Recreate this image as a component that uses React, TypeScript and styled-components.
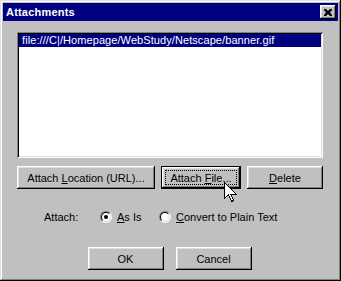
import { FC, ReactNode } from 'react'
import styled, { createGlobalStyle, css } from 'styled-components'

const GlobalStyle = createGlobalStyle`
  html, body {
    margin: 0;
    padding: 0;
    background: #c0c0c0;
  }
  body {
    font-family: "Liberation Sans", Arial, sans-serif;
    font-size: 11px;
  }
`

const raised = css`
  box-shadow: inset -1px -1px #000, inset 1px 1px #dfdfdf,
    inset -2px -2px #808080, inset 2px 2px #fff;
`

const buttonBevel = css`
  box-shadow: inset -1px -1px #000, inset 1px 1px #fff,
    inset -2px -2px #808080, inset 2px 2px #dfdfdf;
`

const Window = styled.div`
  position: relative;
  width: 341px;
  height: 281px;
  box-sizing: border-box;
  padding: 3px;
  background: #c0c0c0;
  ${raised}
`

const TitleBar = styled.div`
  height: 18px;
  background: #000080;
  display: flex;
  align-items: center;
  justify-content: space-between;
  padding: 0 2px 0 3px;
`

const Title = styled.span`
  color: #fff;
  font-weight: bold;
  font-size: 11px;
  letter-spacing: 0.2px;
`

const CloseButton = styled.div`
  width: 16px;
  height: 14px;
  background: #c0c0c0;
  display: flex;
  align-items: center;
  justify-content: center;
  ${buttonBevel}
`

const Body = styled.div`
  padding: 11px 15px 0 14px;
  display: flex;
  flex-direction: column;
`

const ListBox = styled.div`
  height: 126px;
  box-sizing: border-box;
  padding: 2px;
  background: #fff;
  box-shadow: inset 1px 1px #808080, inset -1px -1px #fff,
    inset 2px 2px #000, inset -2px -2px #dfdfdf;
`

const ListItem = styled.div<{ $selected?: boolean }>`
  height: 13px;
  line-height: 13px;
  padding-left: 3px;
  white-space: nowrap;
  letter-spacing: 0.08px;
  color: ${(p) => (p.$selected ? '#fff' : '#000')};
  background: ${(p) => (p.$selected ? '#000080' : 'transparent')};
`

const ButtonRow = styled.div`
  position: relative;
  margin-top: 8px;
  display: flex;
  justify-content: space-between;
`

const Button = styled.div<{ $width: number; $focused?: boolean }>`
  width: ${(p) => p.$width}px;
  height: 23px;
  box-sizing: border-box;
  display: flex;
  align-items: center;
  justify-content: center;
  color: #000;
  background: #c0c0c0;
  ${buttonBevel}
  ${(p) =>
    p.$focused &&
    css`
      border: 1px solid #000;
      padding: 3px;
    `}
`

const FocusLabel = styled.span`
  flex: 1;
  align-self: stretch;
  display: flex;
  align-items: center;
  justify-content: center;
  outline: 1px dotted #000;
  outline-offset: -1px;
`

const Key = styled.span`
  text-decoration: underline;
  text-underline-offset: 1px;
`

const Cursor = styled.svg`
  position: absolute;
  left: 207px;
  top: 16px;
`

const RadioRow = styled.div`
  margin-top: 22px;
  height: 12px;
  display: flex;
  align-items: center;
  padding-left: 27px;
`

const FieldLabel = styled.span`
  width: 56px;
`

const RadioOption = styled.label<{ $width: number }>`
  display: flex;
  align-items: center;
  gap: 5px;
  width: ${(p) => p.$width}px;
`

const RadioOuter = styled.span`
  width: 12px;
  height: 12px;
  box-sizing: border-box;
  border-radius: 50%;
  border: 1px solid;
  border-color: #808080 #fff #fff #808080;
  display: flex;
`

const RadioInner = styled.span`
  flex: 1;
  border-radius: 50%;
  border: 1px solid;
  border-color: #000 #dfdfdf #dfdfdf #000;
  background: #fff;
  display: flex;
  align-items: center;
  justify-content: center;
`

const RadioDot = styled.span`
  width: 4px;
  height: 4px;
  border-radius: 50%;
  background: #000;
`

const Footer = styled.div`
  margin-top: 24px;
  display: flex;
  justify-content: center;
  gap: 12px;
  padding-right: 1px;
`

const Radio: FC<{ checked?: boolean; width: number; children: ReactNode }> = ({
  checked,
  width,
  children,
}) => (
  <RadioOption $width={width}>
    <RadioOuter>
      <RadioInner>{checked && <RadioDot />}</RadioInner>
    </RadioOuter>
    <span>{children}</span>
  </RadioOption>
)

export default function App() {
  return (
    <>
      <GlobalStyle />
      <Window>
        <TitleBar>
          <Title>Attachments</Title>
          <CloseButton>
            <svg width="8" height="7" viewBox="0 0 8 7">
              <path
                d="M0 0h2l2 2 2-2h2v1L6 3.5 8 6v1H6L4 5 2 7H0V6l2-2.5L0 1z"
                fill="#000"
              />
            </svg>
          </CloseButton>
        </TitleBar>
        <Body>
          <ListBox>
            <ListItem $selected>
              file:///C|/Homepage/WebStudy/Netscape/banner.gif
            </ListItem>
          </ListBox>
          <ButtonRow>
            <Button $width={138}>
              Attach&nbsp;<Key>L</Key>ocation (URL)...
            </Button>
            <Button $width={80} $focused>
              <FocusLabel>
                Attach&nbsp;<Key>F</Key>ile...
              </FocusLabel>
            </Button>
            <Button $width={76}>
              <Key>D</Key>elete
            </Button>
            <Cursor width="13" height="21" viewBox="0 0 13 21">
              <path
                d="M0.5 0.5v16l4-4 3 7 2.2-1-3-6.5h5.5z"
                fill="#fff"
                stroke="#000"
                strokeWidth="1"
                shapeRendering="crispEdges"
              />
            </Cursor>
          </ButtonRow>
          <RadioRow>
            <FieldLabel>Attach:</FieldLabel>
            <Radio checked width={59}>
              <Key>A</Key>s Is
            </Radio>
            <Radio width={140}>
              <Key>C</Key>onvert to Plain Text
            </Radio>
          </RadioRow>
          <Footer>
            <Button $width={76}>OK</Button>
            <Button $width={76}>Cancel</Button>
          </Footer>
        </Body>
      </Window>
    </>
  )
}
